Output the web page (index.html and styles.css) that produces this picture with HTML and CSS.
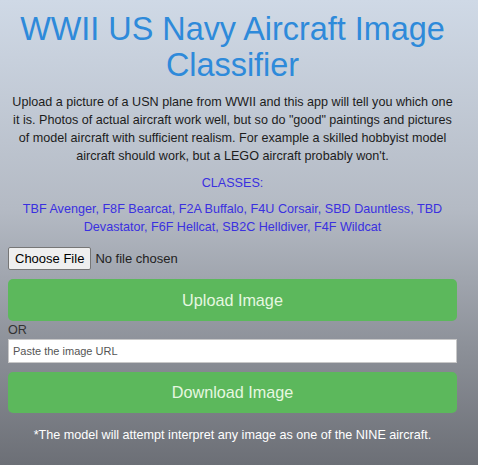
FILE: index.html
```html
<!DOCTYPE html>
<html>
<head>
<meta charset="utf-8">
<title>WWII US Navy Aircraft Image Classifier</title>
<link rel="stylesheet" href="styles.css">
</head>
<body>
<div class="container">
  <h1 class="title">WWII US Navy Aircraft Image Classifier</h1>
  <p class="intro">Upload a picture of a USN plane from WWII and this app will tell you which one it is. Photos of actual aircraft work well, but so do "good" paintings and pictures of model aircraft with sufficient realism. For example a skilled hobbyist model aircraft should work, but a LEGO aircraft probably won't.</p>
  <p class="classes-label">CLASSES:</p>
  <p class="classes">TBF Avenger, F8F Bearcat, F2A Buffalo, F4U Corsair, SBD Dauntless, TBD Devastator, F6F Hellcat, SB2C Helldiver, F4F Wildcat</p>
  <form class="form">
    <div class="file-row">
      <span class="file-btn">Choose File</span>
      <span class="file-name">No file chosen</span>
    </div>
    <button type="button" class="btn">Upload Image</button>
    <div class="or">OR</div>
    <input class="url" type="text" placeholder="Paste the image URL">
    <button type="button" class="btn btn-download">Download Image</button>
  </form>
  <p class="note">*The model will attempt interpret any image as one of the NINE aircraft.</p>
</div>
</body>
</html>
```
FILE: styles.css
```css
html, body {
  margin: 0;
  padding: 0;
  height: 100%;
}
body {
  background: linear-gradient(to bottom, #cfd9e6 0%, #b4bac4 45%, #8c9098 75%, #6c6f76 100%);
  font-family: "Liberation Sans", Arial, sans-serif;
  font-size: 12.6px;
  line-height: 18px;
  color: #1c1c1c;
}
.container {
  width: 449px;
  padding: 12px 0 0 8px;
}
.title {
  margin: 0 0 10px;
  font-size: 32.4px;
  line-height: 35.6px;
  font-weight: normal;
  color: #2e8ada;
  text-align: center;
}
.intro {
  margin: 0 0 9px;
  text-align: center;
}
.classes-label {
  margin: 0 0 8px;
  text-align: center;
  color: #3a30e0;
}
.classes {
  margin: 0;
  text-align: center;
  color: #3a30e0;
}
.form {
  margin: 11px 0 0;
  display: flex;
  flex-direction: column;
}
.file-row {
  display: flex;
  align-items: center;
  gap: 4px;
  height: 23px;
}
.file-btn {
  box-sizing: border-box;
  height: 23px;
  min-width: 80px;
  padding: 0 6px;
  border: 1px solid #767676;
  border-radius: 2px;
  background: #efefef;
  font-size: 13px;
  line-height: 21px;
  color: #000;
  text-align: center;
  white-space: nowrap;
}
.file-name {
  font-size: 13px;
  color: #222;
  white-space: nowrap;
}
.btn {
  margin-top: 9px;
  height: 42px;
  border: 0;
  border-radius: 5px;
  background: #5cb85c;
  color: #e6f7e0;
  font-family: "Liberation Sans", Arial, sans-serif;
  font-size: 16.2px;
  padding: 0;
}
.btn-download {
  height: 41px;
}
.or {
  height: 18px;
  color: #333;
}
.url {
  box-sizing: border-box;
  height: 24px;
  margin: 0;
  padding: 0 4px;
  border: 1px solid #c8c8c8;
  background: #fff;
  font-family: "Liberation Sans", Arial, sans-serif;
  font-size: 11px;
}
.url::placeholder {
  color: #555;
}
.note {
  margin: 13px 0 0;
  text-align: center;
  font-size: 12.6px;
  color: #fff;
}
```
